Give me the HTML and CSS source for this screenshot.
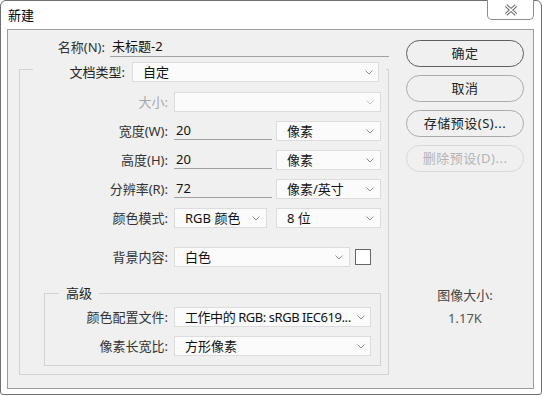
FILE: index.html
```html
<!DOCTYPE html>
<html lang="zh-CN">
<head>
<meta charset="utf-8">
<title>新建</title>
<link rel="stylesheet" href="styles.css">
</head>
<body>
<div class="window">
  <div class="titlebar">
    <span class="title">新建</span>
    <div class="close">
      <svg width="14" height="12" viewBox="0 0 14 12">
        <path d="M2 1.5 L12 10.5 M12 1.5 L2 10.5" stroke="#6a6a6a" stroke-width="3.4" fill="none"/>
        <path d="M2 1.5 L12 10.5 M12 1.5 L2 10.5" stroke="#ffffff" stroke-width="1.4" fill="none"/>
      </svg>
    </div>
  </div>
  <div class="panel">
    <div class="main">
      <div class="name-row">
        <span class="name-label">名称(N):</span>
        <div class="name-input">未标题-2</div>
      </div>
      <div class="group">
        <div class="legend-row">
          <span class="legend-label">文档类型:</span>
          <div class="select doc-type"><span>自定</span><svg class="chev" width="8" height="5" viewBox="0 0 8 5"><polyline points="0.5,0.5 4,4 7.5,0.5"/></svg></div>
        </div>
        <div class="rows">
          <div class="row">
            <span class="lbl disabled">大小:</span>
            <div class="select size-sel disabled"><span></span><svg class="chev" width="8" height="5" viewBox="0 0 8 5"><polyline points="0.5,0.5 4,4 7.5,0.5"/></svg></div>
          </div>
          <div class="row">
            <span class="lbl">宽度(W):</span>
            <div class="num">20</div>
            <div class="select unit"><span>像素</span><svg class="chev" width="8" height="5" viewBox="0 0 8 5"><polyline points="0.5,0.5 4,4 7.5,0.5"/></svg></div>
          </div>
          <div class="row">
            <span class="lbl">高度(H):</span>
            <div class="num">20</div>
            <div class="select unit"><span>像素</span><svg class="chev" width="8" height="5" viewBox="0 0 8 5"><polyline points="0.5,0.5 4,4 7.5,0.5"/></svg></div>
          </div>
          <div class="row">
            <span class="lbl">分辨率(R):</span>
            <div class="num">72</div>
            <div class="select unit"><span>像素/英寸</span><svg class="chev" width="8" height="5" viewBox="0 0 8 5"><polyline points="0.5,0.5 4,4 7.5,0.5"/></svg></div>
          </div>
          <div class="row">
            <span class="lbl">颜色模式:</span>
            <div class="select mode"><span>RGB 颜色</span><svg class="chev" width="8" height="5" viewBox="0 0 8 5"><polyline points="0.5,0.5 4,4 7.5,0.5"/></svg></div>
            <div class="select unit bits"><span>8 位</span><svg class="chev" width="8" height="5" viewBox="0 0 8 5"><polyline points="0.5,0.5 4,4 7.5,0.5"/></svg></div>
          </div>
          <div class="row bg-row">
            <span class="lbl">背景内容:</span>
            <div class="select bg-sel"><span>白色</span><svg class="chev" width="8" height="5" viewBox="0 0 8 5"><polyline points="0.5,0.5 4,4 7.5,0.5"/></svg></div>
            <div class="swatch"></div>
          </div>
        </div>
        <div class="advanced">
          <div class="adv-legend">高级</div>
          <div class="adv-rows">
            <div class="row">
              <span class="lbl adv-lbl">颜色配置文件:</span>
              <div class="select adv-sel"><span class="profile">工作中的 RGB: sRGB IEC619...</span><svg class="chev" width="8" height="5" viewBox="0 0 8 5"><polyline points="0.5,0.5 4,4 7.5,0.5"/></svg></div>
            </div>
            <div class="row">
              <span class="lbl adv-lbl">像素长宽比:</span>
              <div class="select adv-sel"><span>方形像素</span><svg class="chev" width="8" height="5" viewBox="0 0 8 5"><polyline points="0.5,0.5 4,4 7.5,0.5"/></svg></div>
            </div>
          </div>
        </div>
      </div>
    </div>
    <div class="side">
      <div class="btn default">确定</div>
      <div class="btn">取消</div>
      <div class="btn">存储预设(S)...</div>
      <div class="btn disabled">删除预设(D)...</div>
      <div class="info">
        <div class="info-label">图像大小:</div>
        <div class="info-value">1.17K</div>
      </div>
    </div>
  </div>
</div>
</body>
</html>
```

FILE: styles.css
```css
* { box-sizing: border-box; }

body {
  margin: 0;
  background: #ffffff;
  font-family: "Noto Sans", "Noto Sans CJK SC", sans-serif;
  font-size: 13px;
  color: #222;
}

.window {
  width: 542px;
  height: 395px;
  border: 1px solid #707070;
  border-radius: 6px 6px 3px 3px;
  background: #ffffff;
  display: flex;
  flex-direction: column;
}

.titlebar {
  height: 28px;
  display: flex;
  justify-content: space-between;
  align-items: flex-start;
  flex: none;
}

.title {
  margin-left: 7px;
  line-height: 28px;
  color: #000;
  font-size: 13px;
}

.close {
  width: 47px;
  height: 20px;
  margin-top: -1px;
  margin-right: 7px;
  border: 1px solid #8c8c8c;
  border-top: none;
  border-radius: 0 0 5px 5px;
  background: #fff;
  display: flex;
  align-items: center;
  justify-content: center;
}

.panel {
  flex: 1;
  margin: 0 7px 5px 6px;
  border: 1px solid #9c9c9c;
  background: #f0f0f0;
  display: flex;
  gap: 17px;
  padding: 0 8px 0 11px;
}

.main {
  width: 370px;
  padding-top: 7px;
}

.name-row {
  display: flex;
  height: 20px;
  gap: 5px;
}

.name-label {
  width: 86px;
  text-align: right;
  line-height: 20px;
  color: #333;
}

.name-input {
  flex: 1;
  border-bottom: 1px solid #a0a0a0;
  line-height: 19px;
  padding-left: 2px;
  color: #111;
}

.group {
  margin-top: 12px;
  border: 1px solid #d3d3d3;
  padding-bottom: 0;
}

.legend-row {
  display: flex;
  height: 20px;
  margin: -8px 2px 0 13px;
  padding-right: 7px;
  background: #f0f0f0;
  gap: 7px;
}

.legend-label {
  width: 92px;
  text-align: right;
  line-height: 20px;
  color: #222;
}

.select {
  height: 20px;
  background: #fbfbfb;
  border: 1px solid #dcdcdc;
  display: flex;
  align-items: center;
  justify-content: space-between;
  padding: 0 6px 0 10px;
  line-height: 18px;
  color: #111;
  white-space: nowrap;
  overflow: hidden;
}

.select span {
  overflow: hidden;
}

.select .profile {
  letter-spacing: -0.45px;
  overflow: visible;
}

.chev {
  flex: none;
}

.chev polyline {
  fill: none;
  stroke: #8e8e8e;
  stroke-width: 1;
}

.select.disabled .chev polyline {
  stroke: #c4c4c4;
}

.doc-type {
  width: 247px;
  padding-right: 5px;
}

.rows {
  margin-top: 10px;
  display: flex;
  flex-direction: column;
  gap: 9px;
}

.row {
  display: flex;
  height: 20px;
  align-items: center;
}

.lbl {
  width: 148px;
  margin-right: 6px;
  text-align: right;
  line-height: 20px;
  color: #333;
  flex: none;
}

.lbl.disabled {
  color: #a8a8a8;
}

.size-sel {
  width: 207px;
}

.num {
  width: 98px;
  height: 19px;
  align-self: flex-start;
  border-bottom: 1px solid #a0a0a0;
  line-height: 19px;
  padding-left: 2px;
  margin-right: 4px;
  color: #111;
}

.unit {
  width: 105px;
}

.mode {
  width: 93px;
  margin-right: 9px;
}

.bits {
  width: 105px;
}

.bg-row {
  margin-top: 10px;
}

.bg-sel {
  width: 176px;
  margin-right: 5px;
}

.swatch {
  width: 16px;
  height: 16px;
  border: 1px solid #666;
  background: #fff;
}

.advanced {
  margin: 26px 7px 8px 24px;
  border: 1px solid #d3d3d3;
  padding-bottom: 9px;
}

.adv-legend {
  width: fit-content;
  height: 20px;
  line-height: 20px;
  margin: -11px 0 0 14px;
  padding: 0 7px;
  background: #f0f0f0;
  color: #222;
}

.adv-rows {
  margin-top: 4px;
  display: flex;
  flex-direction: column;
  gap: 9px;
}

.adv-lbl {
  width: 123px;
}

.adv-sel {
  width: 197px;
  padding-right: 5px;
}

.side {
  width: 118px;
  padding-top: 10px;
  display: flex;
  flex-direction: column;
  gap: 8px;
}

.btn {
  height: 27px;
  border: 1px solid #ababab;
  border-radius: 14px;
  background: #f0f0f0;
  text-align: center;
  line-height: 25px;
  color: #222;
  letter-spacing: 0.5px;
}

.btn.default {
  border-color: #5e5e5e;
}

.btn.disabled {
  border-color: #d8d8d8;
  color: #b4b4b4;
}

.info {
  margin-top: 105px;
  text-align: center;
  display: flex;
  flex-direction: column;
  gap: 3px;
}

.info-label {
  line-height: 20px;
  color: #444;
}

.info-value {
  line-height: 20px;
  color: #555;
}
```
